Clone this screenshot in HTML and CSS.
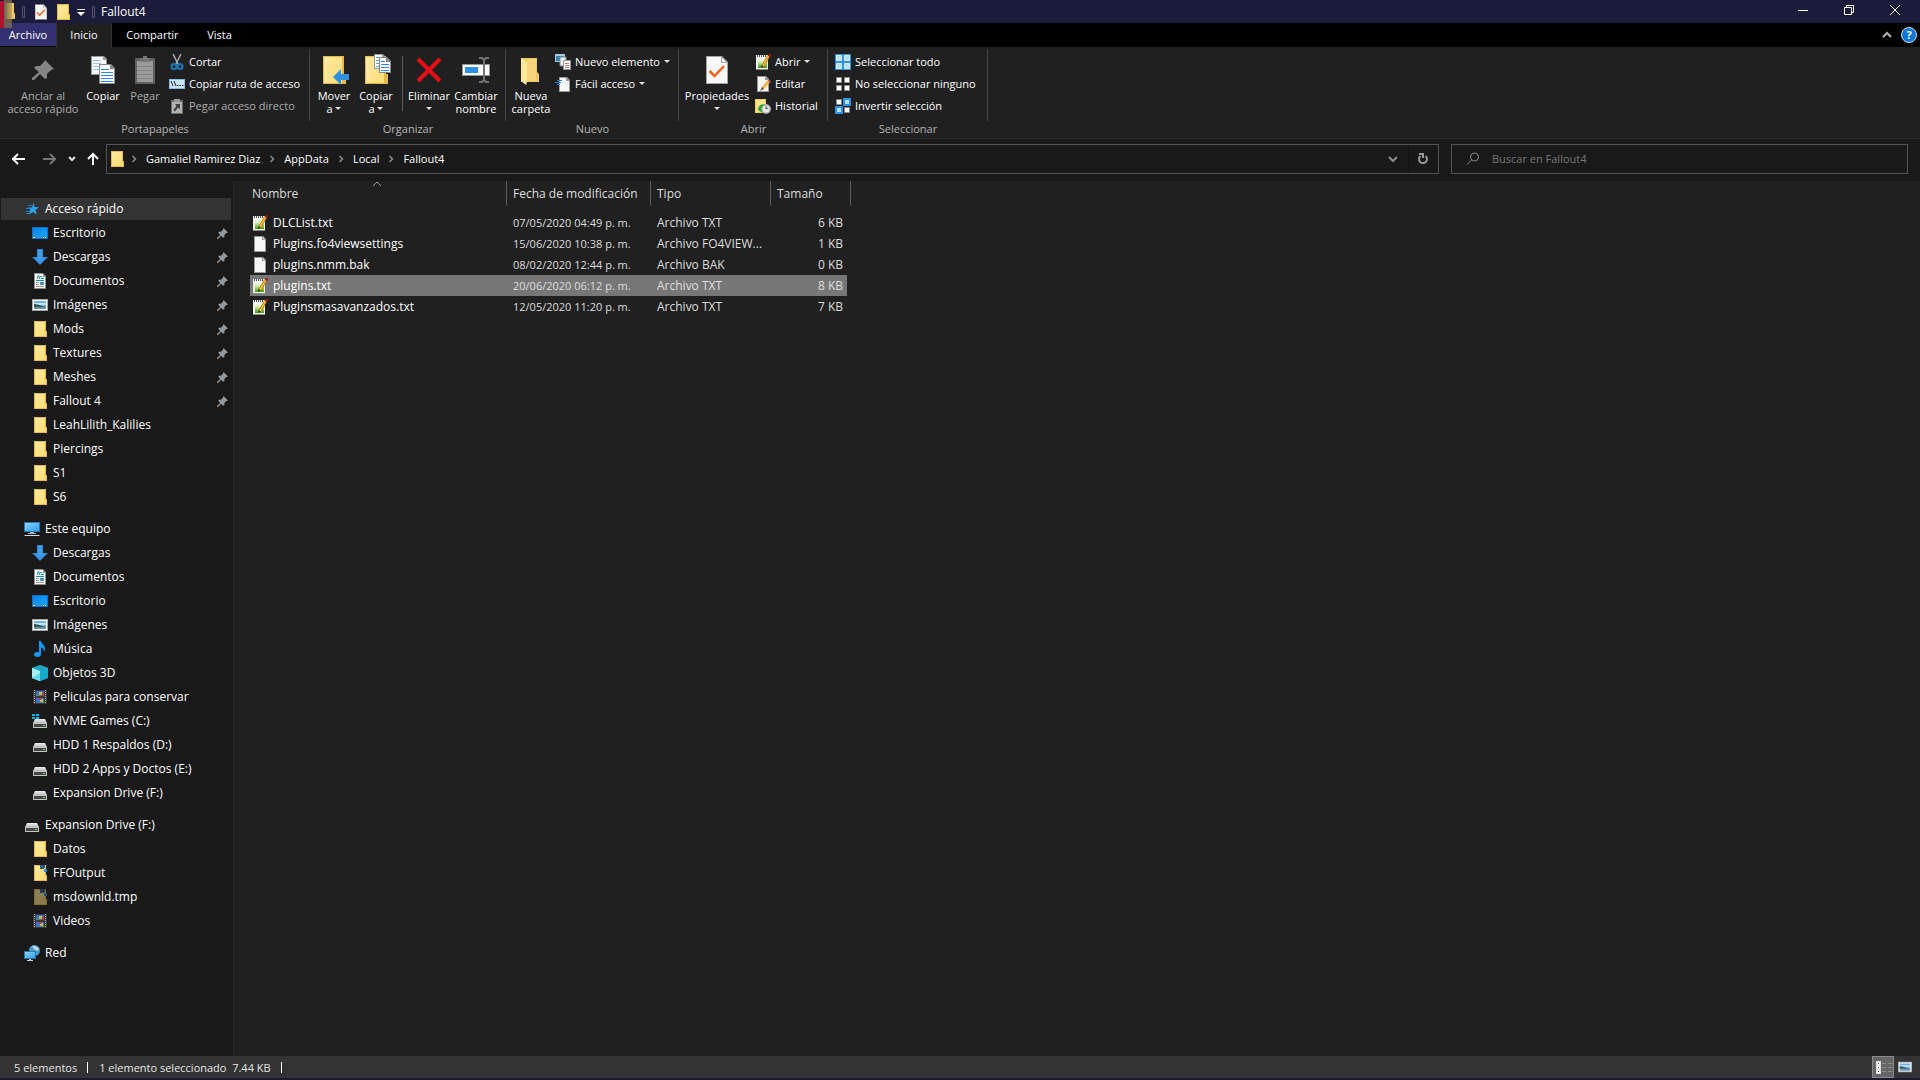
FILE: index.html
```html
<!DOCTYPE html>
<html lang="es">
<head>
<meta charset="utf-8">
<title>Fallout4</title>
<link rel="stylesheet" href="styles.css">
</head>
<body>
<svg class="sprite" aria-hidden="true">
  <defs>
    <linearGradient id="gFolder" x1="0" y1="0" x2="1" y2="1"><stop offset="0" stop-color="#ffe9a2"/><stop offset="1" stop-color="#ffdc78"/></linearGradient>
    <linearGradient id="gBlue" x1="0" y1="0" x2="1" y2="1"><stop offset="0" stop-color="#0a84e8"/><stop offset="1" stop-color="#1aa5ff"/></linearGradient>
    <linearGradient id="gScreen" x1="0" y1="0" x2="1" y2="1"><stop offset="0" stop-color="#8fd6ff"/><stop offset="1" stop-color="#2a9df0"/></linearGradient>
    <linearGradient id="gNote" x1="0" y1="0" x2="0" y2="1"><stop offset="0" stop-color="#ffffff"/><stop offset=".35" stop-color="#d8f0b0"/><stop offset="1" stop-color="#3f9a10"/></linearGradient>
    <linearGradient id="gDrive" x1="0" y1="0" x2="0" y2="1"><stop offset="0" stop-color="#eeeeee"/><stop offset="1" stop-color="#b8bcc0"/></linearGradient>
    <linearGradient id="gApp" x1="0" y1="0" x2="1" y2="0"><stop offset="0" stop-color="#6a5a55"/><stop offset="1" stop-color="#a08a50" stop-opacity=".5"/></linearGradient>
  </defs>
  <symbol id="folder" viewBox="0 0 16 16"><path d="M2 0h12v10h1v6H2z" fill="#e9bc45"/><path d="M3 1h10v14H3z" fill="url(#gFolder)"/><path d="M13 11h1v4h-1z" fill="#ffe07c"/></symbol>
  <symbol id="folder-dl" viewBox="0 0 16 16"><use href="#folder"/><path d="M8 0h5v3h-1v1H8z" fill="#285c91"/><path d="M12 4h3v3h-3z" fill="#2f8bd8"/></symbol>
  <symbol id="page" viewBox="0 0 16 16"><path d="M2 0h9l3 3v13H2z" fill="#9b9b9b"/><path d="M3 1h7v3h3v11H3z" fill="#f7f7f7"/><path d="M11 1.500l1.500 1.500H11z" fill="#fff"/></symbol>
  <symbol id="note" viewBox="0 0 16 16"><path d="M1 1h12v15H1z" fill="#8a8a8a"/><path d="M1 1h12v14H1z" fill="#f2f2f2"/><path d="M3 4h9v10H3z" fill="url(#gNote)"/><path d="M2.500 1v2M4.500 1v2M6.500 1v2M8.500 1v2M10.500 1v2" stroke="#555"/><path d="M13.500 2L8 12" stroke="#b97a14" stroke-width="3"/><path d="M13.500 2L8 12" stroke="#ffc93c" stroke-width="1.500"/><path d="M6.500 11l-.5 3 2.500-1.500z" fill="#3a2a18"/><path d="M13.500 0H16v2.500h-2.500z" fill="#a01515"/></symbol>
  <symbol id="desktop" viewBox="0 0 16 16"><path d="M0 2h16v12H0z" fill="#0a6fc8"/><path d="M1 3h14v10H1z" fill="url(#gBlue)"/><path d="M1 12.500h2M11 12.500h1M13 12.500h1" stroke="#fff"/></symbol>
  <symbol id="down" viewBox="0 0 16 16"><path d="M5 0h6v8h5l-8 8-8-8h5z" fill="#2f8de0"/><path d="M6 1h4v8h3l-5 5-5-5h3z" fill="#4199e8"/></symbol>
  <symbol id="docs" viewBox="0 0 16 16"><path d="M2 0h9l3 3v13H2z" fill="#909090"/><path d="M3 1h8v3h2v11H3z" fill="#fff"/><path d="M5 6l1.500-4L8 6M8 3.500h2M9 5.500h3M4 7.500h8" stroke="#168bdc" fill="none"/><path d="M4 9.500h3M4 11.500h3M4 13.500h8" stroke="#999"/><path d="M8 9h4v3H8z" fill="#4c8fc0"/></symbol>
  <symbol id="picture" viewBox="0 0 16 16"><path d="M0 2h16v12H0z" fill="#a8a8a8"/><path d="M1 3h14v10H1z" fill="#fff"/><path d="M2 4h12v8H2z" fill="#72b1e8"/><path d="M2 6h12v2H2z" fill="#c9e2f4"/><path d="M2 7c3 0 5 1 12 3H2z" fill="#2b5d52"/><path d="M2 10h12v2H2z" fill="#6c93a8"/></symbol>
  <symbol id="star" viewBox="-1 0 16 16"><path d="M8.500 2l1.200 4 4.300.3-3.600 2.700 1.500 4.500-4-2.500-4.300 2.800 1.700-4.700-2.500-2.500 4.100-.2z" fill="#2ca3f2"/><path d="M3 4.500h4M1 7.500h4M1 10.500h4M1 12.500h3" stroke="#1b7cc4"/></symbol>
  <symbol id="pc" viewBox="0 0 16 16"><path d="M0 1h16v10H0z" fill="#2678b5"/><path d="M1 2h14v8H1z" fill="url(#gScreen)"/><path d="M6 11h4v1h2v1H4v-1h2z" fill="#aab6bf"/><path d="M1 14h14l1 1H0z" fill="#d5dde2"/></symbol>
  <symbol id="music" viewBox="0 0 16 16"><path d="M7 0h2c.5 3 4 4 4 7.500 0 1.500-.5 2.500-1 3.500 0-3-1-4-3-4.500V13c0 2-1.500 3-3.500 3S2 15 2 13.500 3.500 11 5 11c1 0 1.500.2 2 .4z" fill="#0d9bff"/></symbol>
  <symbol id="cube" viewBox="0 0 16 16"><path d="M8 0l8 3v10l-8 3-8-3V3z" fill="#27b6cf"/><path d="M8 0l8 3-8 3-8-3z" fill="#1ea3bf"/><path d="M0 3l8 3v10l-8-3z" fill="#a4eef4"/><path d="M0 13l8-5v8z" fill="#66d9e8"/><path d="M8 6l8-3v10l-8 3z" fill="#17a9c9"/></symbol>
  <symbol id="film" viewBox="0 0 16 16"><path d="M1 1h14v14H1z" fill="#3a3a3a"/><path d="M2.500 1v14M13.500 1v14" stroke="#aaa" stroke-dasharray="1 1"/><path d="M4 2h8v5H4zM4 9h8v5H4z" fill="#386fd0"/><path d="M7 3h3v3H7zM8 10h3v3H8z" fill="#d9b735"/><path d="M10 4h2v3h-2zM7 9h2v2H7z" fill="#bb3930"/><path d="M4 6h3v1H4zM9 13h3v1H9z" fill="#4f9f48"/></symbol>
  <symbol id="drive" viewBox="0 0 16 16"><path d="M3 6h10l2 4H1z" fill="url(#gDrive)"/><path d="M1 10h14v5H1z" fill="#c4c4c4"/><path d="M2 11h12v3H2z" fill="#444"/><path d="M11 12h2v1h-2z" fill="#5cf04c"/></symbol>
  <symbol id="drive-win" viewBox="0 0 16 16"><use href="#drive"/><path d="M0 1h3v2H0zM4 1h3v2H4zM0 4h3v2H0zM4 4h3v2H4z" fill="#08b5e8"/></symbol>
  <symbol id="network" viewBox="0 0 16 16"><circle cx="10.500" cy="5.500" r="5.500" fill="#4f9bc5"/><path d="M8 1c3-1 5 1 7 3l-2 2-3-2z" fill="#b9dce9"/><path d="M0 6h12v8H0z" fill="#2475b0"/><path d="M1 7h10v6H1z" fill="url(#gScreen)"/><path d="M5 14h2v1h2v1H3v-1h2z" fill="#c8d3da"/></symbol>
  <symbol id="pin" viewBox="0 0 12 12"><path d="M7 0l5 5-2 .5-2 2V10l-1.500.5-2-2L1 12H0v-1l3.500-3.500-2-2L2 4h2.500l2-2z" fill="#939ba3"/></symbol>
  <symbol id="chev-right" viewBox="0 0 8 8"><path d="M2.500 1l3 3-3 3" fill="none" stroke="#8c8c8c" stroke-width="1.500"/></symbol>
  <symbol id="caret" viewBox="0 0 6 4"><path d="M0 0h6L3 3z" fill="#e0e0e0"/></symbol>
  <symbol id="props" viewBox="0 0 22 28"><path d="M0 0h16l6 6v22H0z" fill="#a4a4a4"/><path d="M1 1h14v6h6v20H1z" fill="#f8f8f8"/><path d="M16 2l4 4h-4z" fill="#fff"/><path d="M3.500 15l5 5L18 10" fill="none" stroke="#f2611c" stroke-width="2.500"/></symbol>
  <symbol id="big-pin" viewBox="0 0 32 32"><path d="M18 6l9 9-3 1-4 4v4l-2 1-5-5-6 6H5v-2l7-6-5-4 2-2h4l4-4z" fill="#858585"/></symbol>
  <symbol id="copy" viewBox="0 0 32 32"><path d="M4 2h13l3 3v16H4z" fill="#999"/><path d="M5 3h11v3h3v14H5z" fill="#f6f9fd"/><path d="M6 6.500h8M6 9.500h8M6 12.500h8M6 15.500h6" stroke="#9cc4f3"/><path d="M12 10h12l4 4v16H12z" fill="#888"/><path d="M13 11h10v4h4v14H13z" fill="#fff"/><path d="M14 15.500h8M14 18.500h12M14 21.500h12M14 24.500h12M14 27.500h12" stroke="#2e87e8"/></symbol>
  <symbol id="paste" viewBox="0 0 32 32"><rect x="6" y="4" width="20" height="26" rx="1" fill="#606060"/><path d="M8 7h16v21H8z" fill="#9b9b9b"/><path d="M8 12.500h16M8 16.500h16M8 20.500h16M8 24.500h16" stroke="#828282"/><path d="M11 4h3V2h4v2h3v4H11z" fill="#777"/></symbol>
  <symbol id="cut" viewBox="0 0 16 16"><path d="M4 0l5 10M12 0L7 10" stroke="#a8adb2" stroke-width="1.500"/><circle cx="5" cy="12.500" r="2.500" fill="none" stroke="#1979bd" stroke-width="2"/><circle cx="11" cy="12.500" r="2.500" fill="none" stroke="#1979bd" stroke-width="2"/></symbol>
  <symbol id="path" viewBox="0 0 16 16"><path d="M0 3h16v10H0z" fill="#8fbde0"/><path d="M1 4h14v8H1z" fill="#c7e4f9"/><path d="M2 5l2 5M5 5l2 5" stroke="#222"/><path d="M8 9.500h1.500M10.500 9.500H12M13 9.500h1.500" stroke="#222"/></symbol>
  <symbol id="paste-link" viewBox="0 0 16 16"><path d="M2 2h12v14H2z" fill="#6b6b6b"/><path d="M3 4h10v11H3z" fill="#b2b2b2"/><path d="M5 1h6v3H5z" fill="#999"/><path d="M6 6h5v5l-2-1.500-3 4-1.500-1.500 3-4z" fill="#3c3c3c"/></symbol>
  <symbol id="move" viewBox="0 0 32 32"><path d="M5 2h21v18h2v10H5z" fill="#e6b94b"/><path d="M6 3h18v26H6z" fill="url(#gFolder)"/><path d="M8 3v26" stroke="#fff0b9"/><path d="M15 23l8-8v5h8v6h-8v5z" fill="#2f8fe0"/></symbol>
  <symbol id="copy-to" viewBox="0 0 32 32"><path d="M5 2h21v18h2v10H5z" fill="#e6b94b"/><path d="M6 3h18v26H6z" fill="url(#gFolder)"/><path d="M8 3v26" stroke="#fff0b9"/><path d="M14 0h9l3 3v12H14z" fill="#999"/><path d="M15 1h7v3h3v10H15z" fill="#fff"/><path d="M16 3.500h4M16 6.500h3M16 9.500h3M16 12.500h3" stroke="#5a9ee8"/><path d="M19 3h8l4 4v12H19z" fill="#888"/><path d="M20 4h6v4h4v10H20z" fill="#fff"/><path d="M21 7.500h4M21 10.500h8M21 13.500h8M21 16.500h8" stroke="#2e87e8"/></symbol>
  <symbol id="delete" viewBox="0 0 32 32"><path d="M5 5l22 22M27 5L5 27" stroke="#e60f17" stroke-width="4"/></symbol>
  <symbol id="rename" viewBox="0 0 32 32"><path d="M2 10h28v12H2z" fill="#929292"/><path d="M3 11h26v10H3z" fill="#fff"/><path d="M5 13h13v6H5z" fill="#2f91e4"/><path d="M19 4h3l2 2 2-2h3M24 5v22M19 28h3l2-2 2 2h3" fill="none" stroke="#737373" stroke-width="2"/></symbol>
  <symbol id="new-folder" viewBox="2 0 32 32"><path d="M8 4h16v14l2 2v8H8z" fill="#f0c862"/><path d="M8 4l6 4v20l-1 3-5-4z" fill="#ffe79c"/><path d="M14 5h9v22h-9z" fill="#f7d47a"/></symbol>
  <symbol id="new-item" viewBox="0 0 16 16"><path d="M0 0h10v8H0z" fill="#a8cbe0"/><path d="M1 2h8v5H1z" fill="#377fae"/><path d="M5 3h6v9H5z" fill="#eee" stroke="#888"/><path d="M8.500 6.500h7v9h-7z" fill="#fff" stroke="#999"/><path d="M10 9.500h4M10 11.500h4M10 13.500h4" stroke="#c77"/></symbol>
  <symbol id="easy" viewBox="0 0 16 16"><path d="M4 1h8l3 3v12H4z" fill="#9a9a9a"/><path d="M5 2h6v3h3v10H5z" fill="#f8f8f8"/><path d="M2 4.500h5M0 6.500h6M2 8.500h3" stroke="#1b87da"/></symbol>
  <symbol id="edit" viewBox="0 0 16 16"><path d="M2 0h9l3 3v13H2z" fill="#999"/><path d="M3 1h7v3h3v11H3z" fill="#f6f6f6"/><path d="M14 5l-7 8" stroke="#eeb54a" stroke-width="3"/><path d="M7 11l-2 4 4-2z" fill="#555"/><path d="M14 4l2 1-1 2-2-2z" fill="#c05050"/></symbol>
  <symbol id="history" viewBox="0 0 16 16"><path d="M0 1h11v12h1v2H0z" fill="#f1cd66"/><path d="M1 2h9v12H1z" fill="#ffe28a"/><circle cx="11" cy="11" r="5" fill="#aaa"/><circle cx="11" cy="11" r="3.500" fill="#e8e8e8"/><path d="M11 8v3l2-1" stroke="#555" fill="none"/><path d="M3 12c0-4 3-6 6-6l-1 2c-2 1-2 3-1 5l1 2z" fill="#28a43a"/></symbol>
  <symbol id="sel-all" viewBox="0 0 16 16"><path d="M0 0h16v16H0z" fill="#2a93e6"/><path d="M1.500 1.500h5v5h-5zM9.500 1.500h5v5h-5zM1.500 9.500h5v5h-5zM9.500 9.500h5v5h-5z" fill="#b8dffb" stroke="#d9efff"/></symbol>
  <symbol id="sel-none" viewBox="0 0 16 16"><path d="M1.500 1.500h5v5h-5zM9.500 1.500h5v5h-5zM1.500 9.500h5v5h-5zM9.500 9.500h5v5h-5z" fill="#fff" stroke="#8a8a8a"/></symbol>
  <symbol id="sel-inv" viewBox="0 0 16 16"><path d="M1.500 1.500h5v5h-5zM9.500 9.500h5v5h-5z" fill="#fff" stroke="#8a8a8a"/><path d="M9 1h6v6H9zM1 9h6v6H1z" fill="#b8dffb" stroke="#2a93e6" stroke-width="2"/></symbol>
</svg>

<header class="titlebar">
  <svg class="app-icon" viewBox="0 0 15 28"><path d="M2 3h12v10h1v6H2z" fill="#efc85c"/><path d="M4 0h8v28H4z" fill="url(#gApp)"/><path d="M0 1h4v27H0z" fill="#b0142c"/></svg>
  <i class="bar"></i>
  <button class="quick quick-doc" aria-label="Propiedades"><svg width="12" height="16"><use href="#props"/></svg></button>
  <button class="quick quick-folder" aria-label="Nueva carpeta"><svg width="16" height="16"><use href="#folder"/></svg></button>
  <button class="quick quick-more" aria-label="Personalizar"><svg width="8" height="8" viewBox="0 0 8 8"><path d="M0 .5h8" stroke="#fff"/><path d="M0 3h8L4 7z" fill="#fff"/></svg></button>
  <i class="bar"></i>
  <h1>Fallout4</h1>
  <div class="controls">
    <button aria-label="Minimizar"><svg width="10" height="10"><path d="M0 5.500h10" stroke="#fff"/></svg></button>
    <button aria-label="Restaurar"><svg width="10" height="10"><path d="M.5 2.500h7v7h-7zM2.500 2V.5h7v7H8" fill="none" stroke="#fff"/></svg></button>
    <button aria-label="Cerrar"><svg width="10" height="10"><path d="M0 0l10 10M10 0L0 10" stroke="#fff"/></svg></button>
  </div>
</header>

<nav class="tabs">
  <button class="tab file">Archivo</button>
  <button class="tab active">Inicio</button>
  <button class="tab share">Compartir</button>
  <button class="tab view">Vista</button>
  <div class="tab-tools">
    <button aria-label="Minimizar la cinta"><svg width="10" height="8"><path d="M1 6l4-4 4 4" fill="none" stroke="#b4b4b4" stroke-width="2"/></svg></button>
    <button class="help" aria-label="Ayuda">?</button>
  </div>
</nav>

<section class="ribbon">
  <div class="group g-clipboard">
    <div class="tools">
      <button class="big dim w-pin"><svg><use href="#big-pin"/></svg><span>Anclar al<br>acceso rápido</span></button>
      <button class="big w-copy"><svg><use href="#copy"/></svg><span>Copiar</span></button>
      <button class="big dim w-paste"><svg><use href="#paste"/></svg><span>Pegar</span></button>
      <div class="stack">
        <button><svg><use href="#cut"/></svg>Cortar</button>
        <button><svg><use href="#path"/></svg>Copiar ruta de acceso</button>
        <button class="dim"><svg><use href="#paste-link"/></svg>Pegar acceso directo</button>
      </div>
    </div>
    <p>Portapapeles</p>
  </div>
  <div class="group g-organize">
    <div class="tools">
      <button class="big w-copy"><svg><use href="#move"/></svg><span>Mover<br>a <svg class="caret"><use href="#caret"/></svg></span></button>
      <button class="big w-copy"><svg><use href="#copy-to"/></svg><span>Copiar<br>a <svg class="caret"><use href="#caret"/></svg></span></button>
      <i class="split"></i>
      <button class="big w-del"><svg><use href="#delete"/></svg><span>Eliminar<br><svg class="caret"><use href="#caret"/></svg></span></button>
      <button class="big w-rename"><svg><use href="#rename"/></svg><span>Cambiar<br>nombre</span></button>
    </div>
    <p>Organizar</p>
  </div>
  <div class="group g-new">
    <div class="tools">
      <button class="big w-del"><svg><use href="#new-folder"/></svg><span>Nueva<br>carpeta</span></button>
      <div class="stack">
        <button><svg><use href="#new-item"/></svg>Nuevo elemento <svg class="caret"><use href="#caret"/></svg></button>
        <button><svg><use href="#easy"/></svg>Fácil acceso <svg class="caret"><use href="#caret"/></svg></button>
      </div>
    </div>
    <p>Nuevo</p>
  </div>
  <div class="group g-open">
    <div class="tools">
      <button class="big w-props"><svg class="props"><use href="#props"/></svg><span>Propiedades<br><svg class="caret"><use href="#caret"/></svg></span></button>
      <div class="stack">
        <button><svg><use href="#note"/></svg>Abrir <svg class="caret"><use href="#caret"/></svg></button>
        <button><svg><use href="#edit"/></svg>Editar</button>
        <button><svg><use href="#history"/></svg>Historial</button>
      </div>
    </div>
    <p>Abrir</p>
  </div>
  <div class="group g-select">
    <div class="tools">
      <div class="stack">
        <button><svg><use href="#sel-all"/></svg>Seleccionar todo</button>
        <button><svg><use href="#sel-none"/></svg>No seleccionar ninguno</button>
        <button><svg><use href="#sel-inv"/></svg>Invertir selección</button>
      </div>
    </div>
    <p>Seleccionar</p>
  </div>
</section>

<div class="address-row">
  <div class="history-nav">
    <button aria-label="Atrás"><svg width="14" height="12"><path d="M1 6h12M6 1L1 6l5 5" fill="none" stroke="#fff" stroke-width="2"/></svg></button>
    <button aria-label="Adelante"><svg width="14" height="12"><path d="M1 6h12M8 1l5 5-5 5" fill="none" stroke="#757575" stroke-width="2"/></svg></button>
    <button class="recent" aria-label="Recientes"><svg width="8" height="6"><path d="M1 1l3 3 3-3" fill="none" stroke="#ddd" stroke-width="2"/></svg></button>
    <button class="up" aria-label="Subir"><svg width="12" height="14"><path d="M6 13V2M1 7l5-5 5 5" fill="none" stroke="#fff" stroke-width="2"/></svg></button>
  </div>
  <div class="location">
    <div class="crumbs">
      <svg class="ico"><use href="#folder"/></svg>
      <svg class="sep"><use href="#chev-right"/></svg><a href="#user">Gamaliel Ramirez Diaz</a>
      <svg class="sep"><use href="#chev-right"/></svg><a href="#appdata">AppData</a>
      <svg class="sep"><use href="#chev-right"/></svg><a href="#local">Local</a>
      <svg class="sep"><use href="#chev-right"/></svg><a href="#fallout4">Fallout4</a>
      <button class="drop" aria-label="Ubicaciones anteriores"><svg width="10" height="8"><path d="M1 2l4 4 4-4" fill="none" stroke="#8c8c8c" stroke-width="2"/></svg></button>
      <button class="refresh" aria-label="Actualizar"><svg width="12" height="12"><path d="M8.500 3a4 4 0 1 1-5 0" fill="none" stroke="#999" stroke-width="2"/><path d="M2 1h4v4" fill="none" stroke="#999" stroke-width="2"/></svg></button>
    </div>
    <label class="search"><svg width="14" height="14"><circle cx="8.500" cy="5" r="4" fill="none" stroke="#888"/><path d="M5.500 8L1 12.500" stroke="#888"/></svg><input type="text" placeholder="Buscar en Fallout4" aria-label="Buscar en Fallout4"></label>
  </div>
</div>

<div class="body">
  <nav class="tree">
    <ul>
      <li class="root current"><a href="#"><svg><use href="#star"/></svg>Acceso rápido</a></li>
      <li><a href="#"><svg><use href="#desktop"/></svg>Escritorio<svg class="pin"><use href="#pin"/></svg></a></li>
      <li><a href="#"><svg><use href="#down"/></svg>Descargas<svg class="pin"><use href="#pin"/></svg></a></li>
      <li><a href="#"><svg><use href="#docs"/></svg>Documentos<svg class="pin"><use href="#pin"/></svg></a></li>
      <li><a href="#"><svg><use href="#picture"/></svg>Imágenes<svg class="pin"><use href="#pin"/></svg></a></li>
      <li><a href="#"><svg><use href="#folder"/></svg>Mods<svg class="pin"><use href="#pin"/></svg></a></li>
      <li><a href="#"><svg><use href="#folder"/></svg>Textures<svg class="pin"><use href="#pin"/></svg></a></li>
      <li><a href="#"><svg><use href="#folder"/></svg>Meshes<svg class="pin"><use href="#pin"/></svg></a></li>
      <li><a href="#"><svg><use href="#folder"/></svg>Fallout 4<svg class="pin"><use href="#pin"/></svg></a></li>
      <li><a href="#"><svg><use href="#folder"/></svg>LeahLilith_Kalilies</a></li>
      <li><a href="#"><svg><use href="#folder"/></svg>Piercings</a></li>
      <li><a href="#"><svg><use href="#folder"/></svg>S1</a></li>
      <li><a href="#"><svg><use href="#folder"/></svg>S6</a></li>
    </ul>
    <ul>
      <li class="root"><a href="#"><svg><use href="#pc"/></svg>Este equipo</a></li>
      <li><a href="#"><svg><use href="#down"/></svg>Descargas</a></li>
      <li><a href="#"><svg><use href="#docs"/></svg>Documentos</a></li>
      <li><a href="#"><svg><use href="#desktop"/></svg>Escritorio</a></li>
      <li><a href="#"><svg><use href="#picture"/></svg>Imágenes</a></li>
      <li><a href="#"><svg><use href="#music"/></svg>Música</a></li>
      <li><a href="#"><svg><use href="#cube"/></svg>Objetos 3D</a></li>
      <li><a href="#"><svg><use href="#film"/></svg>Peliculas para conservar</a></li>
      <li><a href="#"><svg><use href="#drive-win"/></svg>NVME Games (C:)</a></li>
      <li><a href="#"><svg><use href="#drive"/></svg>HDD 1 Respaldos (D:)</a></li>
      <li><a href="#"><svg><use href="#drive"/></svg>HDD 2 Apps y Doctos (E:)</a></li>
      <li><a href="#"><svg><use href="#drive"/></svg>Expansion Drive (F:)</a></li>
    </ul>
    <ul>
      <li class="root"><a href="#"><svg><use href="#drive"/></svg>Expansion Drive (F:)</a></li>
      <li><a href="#"><svg><use href="#folder"/></svg>Datos</a></li>
      <li><a href="#"><svg><use href="#folder-dl"/></svg>FFOutput</a></li>
      <li><a href="#"><svg class="faded"><use href="#folder-dl"/></svg>msdownld.tmp</a></li>
      <li><a href="#"><svg><use href="#film"/></svg>Videos</a></li>
    </ul>
    <ul>
      <li class="root"><a href="#"><svg><use href="#network"/></svg>Red</a></li>
    </ul>
  </nav>

  <main class="files">
    <table>
      <colgroup><col class="c-name"><col class="c-date"><col class="c-type"><col class="c-size"></colgroup>
      <thead>
        <tr><th>Nombre<svg class="sort" width="10" height="6"><path d="M1 5l4-4 4 4" fill="none" stroke="#999"/></svg></th><th>Fecha de modificación</th><th>Tipo</th><th>Tamaño</th></tr>
      </thead>
      <tbody>
        <tr><td><span class="name"><svg><use href="#note"/></svg>DLCList.txt</span></td><td class="date">07/05/2020 04:49 p. m.</td><td>Archivo TXT</td><td>6 KB</td></tr>
        <tr><td><span class="name"><svg><use href="#page"/></svg>Plugins.fo4viewsettings</span></td><td class="date">15/06/2020 10:38 p. m.</td><td>Archivo FO4VIEW...</td><td>1 KB</td></tr>
        <tr><td><span class="name"><svg><use href="#page"/></svg>plugins.nmm.bak</span></td><td class="date">08/02/2020 12:44 p. m.</td><td>Archivo BAK</td><td>0 KB</td></tr>
        <tr class="selected"><td><span class="name"><svg><use href="#note"/></svg>plugins.txt</span></td><td class="date">20/06/2020 06:12 p. m.</td><td>Archivo TXT</td><td>8 KB</td></tr>
        <tr><td><span class="name"><svg><use href="#note"/></svg>Pluginsmasavanzados.txt</span></td><td class="date">12/05/2020 11:20 p. m.</td><td>Archivo TXT</td><td>7 KB</td></tr>
      </tbody>
    </table>
  </main>
</div>

<footer class="status">
  <span>5 elementos</span>
  <span class="selection">1 elemento seleccionado&nbsp; 7.44 KB</span>
  <div class="views">
    <button class="on" aria-label="Detalles"><svg width="20" height="20"><path d="M3 4h5v13H3z" fill="#ddd"/><path d="M4 5h3v3H4zM4 9h3v3H4zM4 13h3v3H4z" fill="#fff"/><path d="M5 6h1v1H5z" fill="#333"/><path d="M5 10h1v1H5z" fill="#28c"/><path d="M5 14h1v1H5z" fill="#c22"/><path d="M9 6.500h4M15 6.500h4M9 10.500h4M15 10.500h4M9 14.500h4M15 14.500h4" stroke="#8c8c8c"/></svg></button>
    <button aria-label="Iconos grandes"><svg width="14" height="14"><use href="#picture"/></svg></button>
  </div>
</footer>
</body>
</html>
```
FILE: styles.css
```css
* { box-sizing: border-box; }
body {
  margin: 0;
  min-height: 100vh;
  display: flex;
  flex-direction: column;
  background: #202020;
  color: #fff;
  font: 12px/16px "Open Sans", "Noto Sans", sans-serif;
  border-bottom: 2px solid #1c1830;
}
button {
  margin: 0;
  padding: 0;
  border: 0;
  background: none;
  color: inherit;
  font: inherit;
  display: flex;
  align-items: center;
  justify-content: center;
}
svg { display: block; flex: none; }
a { color: inherit; text-decoration: none; }
.sprite { position: absolute; width: 0; height: 0; }

.titlebar {
  display: flex;
  align-items: center;
  height: 23px;
  background: #1b1b3b;
}
.app-icon { width: 15px; height: 28px; align-self: flex-start; position: relative; z-index: 1; margin-right: 7px; }
.bar { width: 3px; height: 12px; border: 1px solid #55556e; border-radius: 1px; }
.quick-doc { margin-left: 10px; }
.quick-folder { margin-left: 8px; }
.quick-more { margin: 3px 7px 0 6px; }
h1 { margin: 0 0 0 6px; font-size: 12px; font-weight: 400; }
.controls { display: flex; align-self: stretch; margin-left: auto; padding-right: 2px; }
.controls button { width: 46px; padding-bottom: 3px; }

.tabs { display: flex; height: 24px; background: #000; font-size: 11px; }
.tab { height: 24px; }
.file { width: 56px; height: 23px; background: #32306f; }
.active { width: 56px; background: #202020; border: solid #333; border-width: 0 1px; }
.share { width: 81px; }
.view { width: 53px; }
.tab-tools { display: flex; align-items: center; gap: 9px; margin-left: auto; padding-right: 3px; }
.help {
  width: 16px;
  height: 16px;
  border: 1px solid #ddd;
  border-radius: 50%;
  background: #0878d8;
  font-weight: 700;
}

.ribbon { display: flex; height: 92px; border-bottom: 1px solid #2d2d2d; font-size: 11px; }
.group { display: flex; flex-direction: column; position: relative; padding-top: 4px; }
.group::after {
  content: "";
  position: absolute;
  right: 0;
  top: 2px;
  width: 1px;
  height: 72px;
  background: #454545;
}
.group p { margin: 0; text-align: center; color: #b4b4b4; }
.tools { display: flex; height: 70px; }
.g-clipboard { width: 310px; }
.g-organize { width: 196px; }
.g-new { width: 173px; }
.g-open { width: 149px; }
.g-select { width: 160px; }
.g-clipboard .tools { padding-left: 4px; }
.g-organize .tools { padding-left: 3px; }
.g-new .tools { padding-left: 1px; }
.g-select .tools { padding-left: 7px; }
.dim { color: #acacac; }
.big {
  flex-direction: column;
  justify-content: flex-start;
  padding-top: 3px;
  line-height: 13px;
  white-space: nowrap;
}
.big > svg { width: 32px; height: 32px; margin-bottom: 3px; }
.big > .props { height: 28px; margin: 2px 0 5px; }
.big .caret { display: inline-block; vertical-align: 2px; }
.w-pin { width: 78px; }
.w-props { width: 76px; }
.w-copy { width: 42px; }
.w-paste { width: 42px; margin-right: 3px; }
.w-del { width: 48px; }
.w-rename { width: 46px; }
.split { width: 1px; height: 55px; margin: 5px 2px 0 5px; background: #5c5c5c; }
.caret { width: 6px; height: 4px; }
.stack button { height: 22px; gap: 4px; white-space: nowrap; }
.stack button > svg:first-child { width: 16px; height: 16px; }

.address-row { display: flex; height: 42px; padding: 5px 12px 7px 12px; background: #191919; font-size: 11px; }
.history-nav { display: flex; width: 94px; }
.history-nav button { width: 14px; margin-right: 16px; }
.history-nav .recent { width: 8px; margin-right: 10px; margin-left: -4px; }
.history-nav .up { width: 14px; margin-right: 0; }
.location { display: grid; flex: 1; grid-template-columns: 35fr 12fr; gap: 12px; }
.crumbs { display: flex; align-items: center; border: 1px solid #535353; padding-left: 2px; }
.ico { width: 16px; height: 16px; margin-right: -3px; }
.sep { width: 8px; height: 8px; margin: 0 8px; }
.drop { width: 30px; margin-left: auto; }
.refresh { width: 30px; align-self: stretch; border-left: 1px solid #111; }
.search { display: flex; align-items: center; border: 1px solid #535353; padding-left: 14px; }
.search input {
  flex: 1;
  min-width: 0;
  margin-left: 12px;
  padding: 0;
  border: 0;
  outline: 0;
  background: none;
  color: #fff;
  font: inherit;
}
.search input::placeholder { color: #777; opacity: 1; }

.body { display: flex; flex: 1; }
.tree { width: 234px; padding: 16px 2px 0 0; background: #191919; border-right: 1px solid #2b2b2b; }
.tree ul { margin: 0 0 8px; padding: 0; list-style: none; }
.tree a { display: flex; align-items: center; gap: 5px; height: 24px; padding-left: 32px; }
.tree .root a { padding-left: 24px; }
.tree .current a { background: #333; border: solid #191919; border-width: 1px 0 1px 1px; padding-left: 23px; }
.tree svg { width: 16px; height: 16px; }
.tree .pin { width: 11px; height: 11px; margin: 0 3px 0 auto; }
.faded { opacity: .5; }

.files { flex: 1; padding-left: 16px; }
table { table-layout: fixed; width: 601px; border-collapse: separate; border-spacing: 0; }
.c-name { width: 257px; }
.c-date { width: 144px; }
.c-type { width: 120px; }
.c-size { width: 80px; }
th {
  position: relative;
  height: 25px;
  padding: 0 6px;
  border-right: 1px solid #5c5c5c;
  font-weight: 400;
  text-align: left;
  color: #dedede;
  white-space: nowrap;
}
th:first-child { padding-left: 2px; }
.sort { position: absolute; left: calc(50% - 6px); top: 0; }
tbody::before { content: ""; display: block; height: 6px; }
td { height: 21px; padding: 0 6px; color: #dedede; white-space: nowrap; }
td:first-child { padding-left: 2px; color: #fff; }
td:last-child { text-align: right; padding-right: 8px; }
.date { font-size: 11px; }
.name { display: flex; align-items: center; gap: 5px; }
.name svg { width: 16px; height: 16px; }
.selected td { background: linear-gradient(#777, #777) no-repeat; }
.selected td:last-child { background-size: calc(100% - 4px) 100%; }

.status { display: flex; align-items: center; height: 22px; background: #333; color: #e6e6e6; padding-left: 14px; font-size: 11px; }
.status span { padding-right: 10px; border-right: 1px solid #fff; line-height: 11px; }
.status .selection { margin-left: 11px; }
.views { display: flex; align-items: center; gap: 4px; margin-left: auto; padding-right: 8px; }
.views .on { width: 22px; height: 22px; background: #666; border: 1px solid #888; }
```
